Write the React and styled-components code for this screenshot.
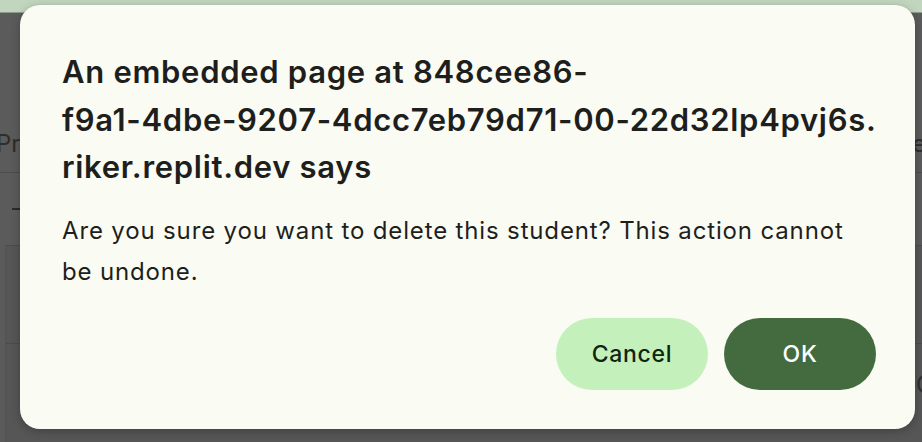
import React from "react";
import styled, { createGlobalStyle } from "styled-components";

const Global = createGlobalStyle`
  html, body { margin: 0; padding: 0; background: #575857; }
  body { font-family: Inter, "Noto Sans", "Liberation Sans", sans-serif; }
  * { box-sizing: border-box; }
`;

const Screen = styled.div`
  position: relative;
  width: 922px;
  height: 442px;
  overflow: hidden;
  background: #575857;
  display: flex;
  flex-direction: column;
`;

const TopBar = styled.div`
  height: 13px;
  flex: none;
  background: #c2d6bf;
  border-bottom: 1px solid #8e9c8b;
`;

const Page = styled.div`
  flex: 1;
  display: flex;
  flex-direction: column;
  background: #5a5b5a;
`;

const TabRow = styled.div`
  display: flex;
  justify-content: space-between;
  align-items: center;
  height: 58px;
  margin-top: 102px;
  font-size: 24px;
  color: #2d2e2d;
  border-bottom: 1px solid #4c4d4b;
`;

const TabText = styled.span`
  margin-left: ${(p) => p.$left || 0}px;
  margin-right: ${(p) => p.$right || 0}px;
`;

const Dash = styled.div`
  width: 14px;
  height: 2px;
  margin: 35px 0 0 12px;
  background: #2a2a2a;
`;

const TableArea = styled.div`
  flex: 1;
  margin-top: 35px;
  border-top: 1px solid #4c4d4b;
  border-left: 1px solid #515251;
  margin-left: 5px;
  background: #555655;
  display: flex;
  flex-direction: column;
`;

const TableRow = styled.div`
  height: ${(p) => p.$h}px;
  display: flex;
  justify-content: flex-end;
  align-items: center;
  font-size: 24px;
  color: #2d2e2d;
  border-bottom: ${(p) => (p.$line ? "1px solid #4c4d4b" : "none")};
`;

const ClippedCell = styled.span`
  width: 6px;
  overflow: hidden;
  white-space: nowrap;
`;

const Dialog = styled.div`
  position: absolute;
  left: 20px;
  top: 5px;
  width: 895px;
  height: 424px;
  background: #fafbf3;
  border-radius: 20px;
  box-shadow: 0 2px 10px rgba(0, 0, 0, 0.25);
  padding: 43px 39px 39px 42px;
  display: flex;
  flex-direction: column;
`;

const Title = styled.div`
  font-size: 31px;
  font-weight: 600;
  letter-spacing: 0.7px;
  line-height: 47.5px;
  color: #1e1f1d;
  white-space: nowrap;
`;

const Message = styled.div`
  margin-top: 19px;
  font-size: 24px;
  font-weight: 400;
  letter-spacing: 0.85px;
  line-height: 41px;
  color: #1e1f1d;
  white-space: nowrap;
`;

const Actions = styled.div`
  margin-top: auto;
  display: flex;
  justify-content: flex-end;
  gap: 16px;
`;

const Button = styled.button`
  width: 152px;
  height: 72px;
  padding: 0;
  border: none;
  border-radius: 36px;
  font-family: inherit;
  font-size: 23px;
  font-weight: 550;
  letter-spacing: 0.7px;
  cursor: pointer;
  background: ${(p) => (p.$primary ? "#436b3f" : "#c4f0bc")};
  color: ${(p) => (p.$primary ? "#ffffff" : "#102410")};
`;

export default function App() {
  return (
    <>
      <Global />
      <Screen>
        <TopBar />
        <Page>
          <TabRow>
            <TabText $left={-4}>Preview</TabText>
            <TabText $right={-4}>Table</TabText>
          </TabRow>
          <Dash />
          <TableArea>
            <TableRow $h={98} $line />
            <TableRow $h={80}>
              <ClippedCell>Class</ClippedCell>
            </TableRow>
          </TableArea>
        </Page>
        <Dialog role="dialog">
          <Title>
            An embedded page at 848cee86-
            <br />
            f9a1-4dbe-9207-4dcc7eb79d71-00-22d32lp4pvj6s.
            <br />
            riker.replit.dev says
          </Title>
          <Message>
            Are you sure you want to delete this student? This action cannot
            <br />
            be undone.
          </Message>
          <Actions>
            <Button>Cancel</Button>
            <Button $primary>OK</Button>
          </Actions>
        </Dialog>
      </Screen>
    </>
  );
}
